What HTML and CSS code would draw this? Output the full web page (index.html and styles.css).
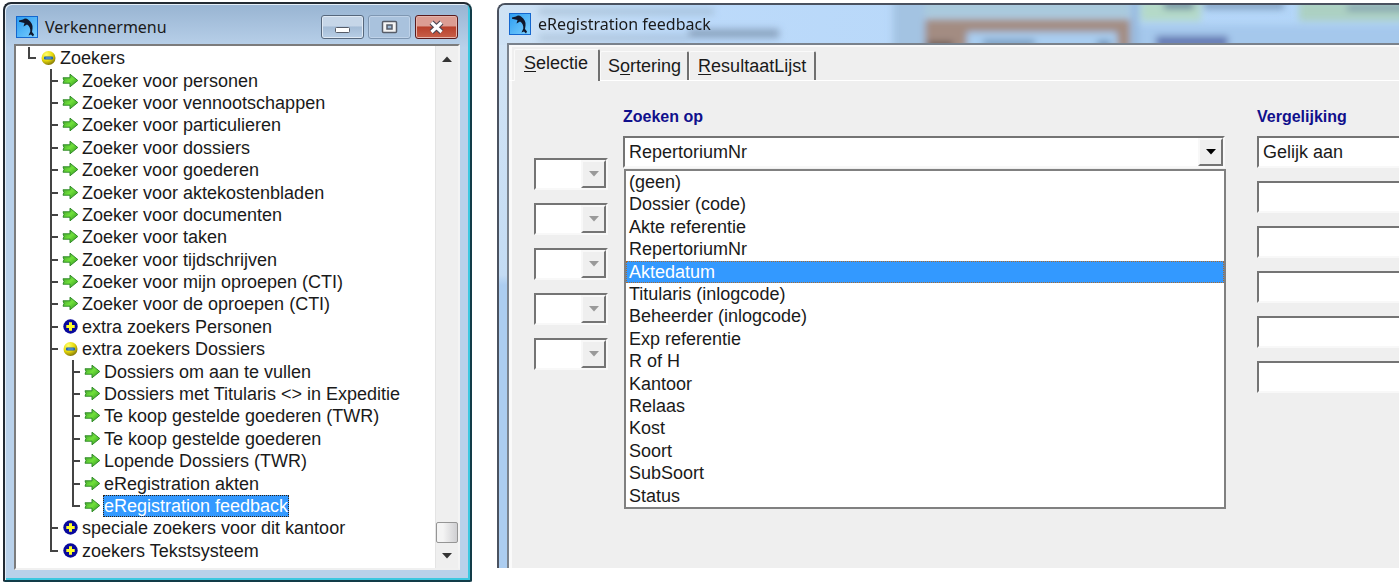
FILE: index.html
```html
<!DOCTYPE html>
<html lang="nl">
<head>
<meta charset="utf-8">
<title>eRegistration feedback</title>
<link rel="stylesheet" href="styles.css">
</head>
<body>
<svg class="defs" aria-hidden="true">
  <defs>
    <linearGradient id="green" x1="0" y1="0" x2="1" y2="1"><stop offset="0" stop-color="#3f9a2c"/><stop offset=".5" stop-color="#6fe03a"/><stop offset="1" stop-color="#2c8c1c"/></linearGradient>
    <radialGradient id="yellow" cx=".35" cy=".25" r=".8"><stop offset="0" stop-color="#ffff6a"/><stop offset=".55" stop-color="#e6d80c"/><stop offset="1" stop-color="#7d7208"/></radialGradient>
    <linearGradient id="sea" x1="0" y1="0" x2="1" y2="1"><stop offset="0" stop-color="#2b9cf0"/><stop offset="1" stop-color="#7cd0ff"/></linearGradient>
  </defs>
  <symbol id="arrow" viewBox="0 0 18 18"><path d="M1 5.800H8V2.200L15.800 8.500L8 14.800V11.200H1L2 8.500Z" fill="url(#green)" stroke="#2f8a28" stroke-width="1"/></symbol>
  <symbol id="minus" viewBox="0 0 18 18"><circle cx="8.500" cy="9" r="7" fill="url(#yellow)"/><rect x="4" y="7.400" width="9" height="3.200" rx="1" fill="#1d5fae"/><path d="M5.500 9h6" stroke="#6fb0e8"/></symbol>
  <symbol id="plus" viewBox="0 0 18 18"><circle cx="8.500" cy="8.500" r="7.200" fill="#0a0a9c"/><path d="M8.500 4.300v8.400M4.300 8.500h8.400" stroke="#ffff2a" stroke-width="3"/></symbol>
  <symbol id="dolphin" viewBox="0 0 22 22"><rect x=".5" y=".5" width="21" height="21" fill="url(#sea)" stroke="#1467cf"/><path d="M3 4.500L7 3.500C8.500 2 10.500 2 12 3.500C15.500 6 17 9 16.500 12.500L16 16L18 18.500L17 20.500L15 18.500L12.500 19.500L14.300 15.500C14.500 12.500 13.500 10 11 8.500L7.500 10.500L8.500 7L3 5.800Z" fill="#10182c"/></symbol>
  <symbol id="down" viewBox="0 0 10 6"><path d="M0 0h10L5 5.500Z" fill="currentColor"/></symbol>
</svg>

<section class="window explorer">
  <header class="title">
    <svg class="logo" aria-hidden="true"><use href="#dolphin"/></svg>
    <h1>Verkennermenu</h1>
    <div class="controls">
      <button class="control" aria-label="Minimaliseren"><svg viewBox="0 0 40 22"><rect x="13.500" y="11.500" width="14" height="5" rx="1" fill="#fff" stroke="#565c68"/></svg></button>
      <button class="control dim" aria-label="Maximaliseren"><svg viewBox="0 0 40 22"><rect x="13.500" y="5.500" width="14" height="11" rx="1" fill="#f4f4f4" stroke="#565c68" stroke-width="1.500"/><rect x="18" y="9" width="5" height="4" fill="#9db9d6" stroke="#565c68" stroke-width="1.500"/></svg></button>
      <button class="control close" aria-label="Sluiten"><svg viewBox="0 0 40 22"><path d="M15.500 6.500l10 9.500M25.500 6.500l-10 9.500" stroke="#4a4350" stroke-width="5.500"/><path d="M15.500 6.500l10 9.500M25.500 6.500l-10 9.500" stroke="#fff" stroke-width="3.200"/></svg></button>
    </div>
  </header>
  <div class="pane">
    <ul class="tree">
      <li><i class="elbow"></i><svg><use href="#minus"/></svg><button>Zoekers</button></li>
      <li><i></i><i class="tee"></i><svg><use href="#arrow"/></svg><button>Zoeker voor personen</button></li>
      <li><i></i><i class="tee"></i><svg><use href="#arrow"/></svg><button>Zoeker voor vennootschappen</button></li>
      <li><i></i><i class="tee"></i><svg><use href="#arrow"/></svg><button>Zoeker voor particulieren</button></li>
      <li><i></i><i class="tee"></i><svg><use href="#arrow"/></svg><button>Zoeker voor dossiers</button></li>
      <li><i></i><i class="tee"></i><svg><use href="#arrow"/></svg><button>Zoeker voor goederen</button></li>
      <li><i></i><i class="tee"></i><svg><use href="#arrow"/></svg><button>Zoeker voor aktekostenbladen</button></li>
      <li><i></i><i class="tee"></i><svg><use href="#arrow"/></svg><button>Zoeker voor documenten</button></li>
      <li><i></i><i class="tee"></i><svg><use href="#arrow"/></svg><button>Zoeker voor taken</button></li>
      <li><i></i><i class="tee"></i><svg><use href="#arrow"/></svg><button>Zoeker voor tijdschrijven</button></li>
      <li><i></i><i class="tee"></i><svg><use href="#arrow"/></svg><button>Zoeker voor mijn oproepen (CTI)</button></li>
      <li><i></i><i class="tee"></i><svg><use href="#arrow"/></svg><button>Zoeker voor de oproepen (CTI)</button></li>
      <li><i></i><i class="tee"></i><svg><use href="#plus"/></svg><button>extra zoekers Personen</button></li>
      <li><i></i><i class="tee"></i><svg><use href="#minus"/></svg><button>extra zoekers Dossiers</button></li>
      <li><i></i><i class="line"></i><i class="tee"></i><svg><use href="#arrow"/></svg><button>Dossiers om aan te vullen</button></li>
      <li><i></i><i class="line"></i><i class="tee"></i><svg><use href="#arrow"/></svg><button>Dossiers met Titularis &lt;&gt; in Expeditie</button></li>
      <li><i></i><i class="line"></i><i class="tee"></i><svg><use href="#arrow"/></svg><button>Te koop gestelde goederen (TWR)</button></li>
      <li><i></i><i class="line"></i><i class="tee"></i><svg><use href="#arrow"/></svg><button>Te koop gestelde goederen</button></li>
      <li><i></i><i class="line"></i><i class="tee"></i><svg><use href="#arrow"/></svg><button>Lopende Dossiers (TWR)</button></li>
      <li><i></i><i class="line"></i><i class="tee"></i><svg><use href="#arrow"/></svg><button>eRegistration akten</button></li>
      <li><i></i><i class="line"></i><i class="elbow"></i><svg><use href="#arrow"/></svg><button class="selected">eRegistration feedback</button></li>
      <li><i></i><i class="tee"></i><svg><use href="#plus"/></svg><button>speciale zoekers voor dit kantoor</button></li>
      <li><i></i><i class="elbow"></i><svg><use href="#plus"/></svg><button>zoekers Tekstsysteem</button></li>
    </ul>
    <div class="scrollbar">
      <button class="step" aria-label="Omhoog"><svg class="up"><use href="#down"/></svg></button>
      <div class="track"><div class="thumb"></div></div>
      <button class="step" aria-label="Omlaag"><svg><use href="#down"/></svg></button>
    </div>
  </div>
</section>

<section class="window feedback">
  <header class="title">
    <svg class="glass" viewBox="0 0 900 40" aria-hidden="true">
      <defs>
        <filter id="soft" x="-10%" y="-50%" width="120%" height="200%"><feGaussianBlur stdDeviation="3.500"/></filter>
        <linearGradient id="sky"><stop offset="0" stop-color="#cfe2f4"/><stop offset=".2" stop-color="#bcdafa"/><stop offset="1" stop-color="#b2d5f8"/></linearGradient>
      </defs>
      <rect width="900" height="40" fill="url(#sky)"/>
      <g filter="url(#soft)">
        <rect x="40" y="3" width="175" height="7" fill="#9db4ca" opacity=".6"/>
        <rect x="40" y="29" width="150" height="8" fill="#9db4ca" opacity=".5"/>
        <rect x="190" y="24" width="90" height="9" fill="#7f97b2" opacity=".8"/>
        <rect x="394" y="-10" width="32" height="60" fill="#a3c3e2"/>
        <rect x="426" y="-8" width="205" height="20" fill="#a9c9dc"/>
        <rect x="426" y="14" width="205" height="34" fill="#a38c82"/>
        <rect x="468" y="27" width="150" height="22" fill="#a9cdf0"/>
        <rect x="484" y="35" width="52" height="6" fill="#6d8fb4"/>
        <rect x="598" y="36" width="14" height="6" fill="#5f7fa6"/>
        <rect x="428" y="37" width="26" height="6" fill="#5a4a48"/>
        <rect x="632" y="-8" width="8" height="56" fill="#96b9de"/>
        <rect x="640" y="20" width="270" height="30" fill="#a5c8ec"/>
        <rect x="642" y="-6" width="60" height="22" fill="#b4d9c8"/>
        <rect x="800" y="-6" width="110" height="22" fill="#acd0c2"/>
        <rect x="665" y="-3" width="30" height="7" fill="#66839c"/>
        <rect x="705" y="-3" width="80" height="7" fill="#7e9cbd"/>
        <rect x="848" y="0" width="60" height="6" fill="#7f9cae"/>
        <rect x="657" y="31" width="72" height="12" fill="#6478b2"/>
      </g>
    </svg>
    <svg class="logo" aria-hidden="true"><use href="#dolphin"/></svg>
    <h1>eRegistration feedback</h1>
  </header>
  <div class="client">
    <nav class="tabs" role="tablist">
      <button role="tab" aria-selected="true" class="tab active"><u>S</u>electie</button>
      <button role="tab" class="tab">S<u>o</u>rtering</button>
      <button role="tab" class="tab"><u>R</u>esultaatLijst</button>
    </nav>
    <form class="page">
      <div class="operators">
        <div class="combo"><select disabled aria-label="Operator 1"></select><span class="drop"><svg><use href="#down"/></svg></span></div>
        <div class="combo"><select disabled aria-label="Operator 2"></select><span class="drop"><svg><use href="#down"/></svg></span></div>
        <div class="combo"><select disabled aria-label="Operator 3"></select><span class="drop"><svg><use href="#down"/></svg></span></div>
        <div class="combo"><select disabled aria-label="Operator 4"></select><span class="drop"><svg><use href="#down"/></svg></span></div>
        <div class="combo"><select disabled aria-label="Operator 5"></select><span class="drop"><svg><use href="#down"/></svg></span></div>
      </div>
      <div class="fields">
        <label for="search">Zoeken op</label>
        <div class="combo">
          <select id="search"><option>RepertoriumNr</option></select>
          <span class="drop enabled"><svg><use href="#down"/></svg></span>
          <ul class="options" role="listbox">
            <li>(geen)</li>
            <li>Dossier (code)</li>
            <li>Akte referentie</li>
            <li>RepertoriumNr</li>
            <li class="selected">Aktedatum</li>
            <li>Titularis (inlogcode)</li>
            <li>Beheerder (inlogcode)</li>
            <li>Exp referentie</li>
            <li>R of H</li>
            <li>Kantoor</li>
            <li>Relaas</li>
            <li>Kost</li>
            <li>Soort</li>
            <li>SubSoort</li>
            <li>Status</li>
          </ul>
        </div>
      </div>
      <div class="fields compare">
        <label for="compare">Vergelijking</label>
        <div class="combo"><select id="compare"><option>Gelijk aan</option></select></div>
        <div class="combo"><select aria-label="Vergelijking 2"></select></div>
        <div class="combo"><select aria-label="Vergelijking 3"></select></div>
        <div class="combo"><select aria-label="Vergelijking 4"></select></div>
        <div class="combo"><select aria-label="Vergelijking 5"></select></div>
        <div class="combo"><select aria-label="Vergelijking 6"></select></div>
      </div>
    </form>
  </div>
</section>
</body>
</html>
```
FILE: styles.css
```css
* { box-sizing: border-box; }

body {
  margin: 0;
  padding: 2px 0 4px 3px;
  min-height: 100vh;
  display: flex;
  gap: 25px;
  overflow: hidden;
  background: #fff;
  color: #1a1a1a;
  font: 18px/22px "Liberation Sans", Arial, sans-serif;
}

button, select { font: inherit; color: inherit; }
button { border: 0; padding: 0; background: none; }
ul { margin: 0; padding: 0; list-style: none; }
.defs { position: absolute; width: 0; height: 0; }

.window { display: flex; flex-direction: column; }

.title {
  display: flex;
  align-items: center;
  gap: 7px;
  flex: none;
}
.title h1 {
  margin: 0;
  font: 16px/22px "Noto Sans", "Open Sans", sans-serif;
}
.logo { width: 22px; height: 22px; flex: none; }

/* Explorer window */
.explorer {
  flex: 0 0 469px;
  padding: 0 10px 10px 9px;
  border: 2px solid #222a33;
  border-right-color: #123c48;
  border-bottom-color: #123c48;
  border-radius: 8px 8px 2px 2px;
  background: linear-gradient(#98b4d2, #b9d1ea 44px);
  box-shadow: inset 1px 1px #e4eef8, inset -2px -2px #3cc8e0;
}
.explorer .title { height: 40px; padding: 6px 2px 0; }
.controls { display: flex; gap: 4px; margin-left: auto; align-self: flex-start; margin-top: 5px; }
.control {
  width: 43px;
  height: 24px;
  border: 1px solid #56677c;
  border-radius: 3px;
  background: linear-gradient(#c6d6e8 45%, #a4bcd6 50%, #b8cee6);
  box-shadow: inset 0 0 0 1px #dfe9f4;
}
.control svg { display: block; width: 40px; height: 22px; }
.control.dim { border-color: #7f97b2; background: #a9c2dd; box-shadow: inset 0 0 0 1px #bfd2e8; }
.control.close {
  border-color: #5a1a1c;
  background: linear-gradient(#dc9d93 45%, #b8402c 50%, #c8604a);
  box-shadow: inset 0 0 0 1px #e6b5ac;
}

.pane {
  flex: 1;
  display: flex;
  border: 2px solid #7c7c7c;
  border-right-color: #f4f4f4;
  border-bottom-color: #f0f0f0;
  background: #fff;
}
.tree {
  flex: 1;
  display: flex;
  flex-direction: column;
  padding: 1px 0 6px 2px;
}
.tree li { flex: 1 0 22px; display: flex; align-items: center; }
.tree i { width: 22px; align-self: stretch; position: relative; }
.tree svg { width: 18px; height: 18px; margin-right: 1px; }
.tree button { padding: 0 1px; line-height: 22px; white-space: nowrap; }
.tree .selected { background: #3399ff; color: #fff; outline: 1px dotted #332211; outline-offset: -1px; }

.tee::before, .line::before, .elbow::before {
  content: "";
  position: absolute;
  left: 10px;
  top: 0;
  bottom: 0;
  border-left: 2px solid #444;
}
.elbow::before { bottom: 50%; }
.tee::after, .elbow::after {
  content: "";
  position: absolute;
  left: 10px;
  top: 50%;
  width: 8px;
  border-top: 2px solid #444;
  margin-top: -1px;
}

.scrollbar {
  width: 23px;
  display: flex;
  flex-direction: column;
  background: #efefef;
  border-left: 1px solid #e4e4e4;
}
.step { height: 25px; display: flex; align-items: center; justify-content: center; color: #333; }
.step svg { width: 10px; height: 6px; }
.step .up { transform: rotate(180deg); }
.track { flex: 1; display: flex; flex-direction: column; justify-content: flex-end; }
.thumb {
  height: 21px;
  border: 1px solid #959595;
  border-radius: 2px;
  background: linear-gradient(90deg, #f4f4f4 30%, #cfcfd2);
}

/* Feedback window, running off the right edge */
.feedback {
  flex: 1;
  min-width: 0;
  margin: 1px 0 14px;
  padding-left: 8px;
  border: solid #4a5260;
  border-width: 2px 0 0 2px;
  border-top-left-radius: 8px;
  background: linear-gradient(#d4e5f5, #c4dcf4 270px, #accdf0 280px);
}
.feedback .title { position: relative; height: 38px; padding-left: 2px; }
.feedback .title > * { position: relative; }
.feedback .title .glass {
  position: absolute;
  left: -8px;
  top: 0;
  width: 900px;
  height: 40px;
  border-top-left-radius: 6px;
}
.client {
  position: relative;
  flex: 1;
  display: flex;
  flex-direction: column;
  border: solid #7a828c;
  border-width: 2px 0 0 2px;
  background: #efefef;
  box-shadow: inset 3px 2px #fafafa;
}

.tabs { display: flex; align-items: flex-end; padding: 4px 0 0 5px; border-bottom: 1px solid #fff; }
.tab {
  height: 29px;
  padding: 0 6px 0 7px;
  border-right: 2px solid #707070;
  border-top: 1px solid #fafafa;
  border-left: 1px solid #fafafa;
  border-radius: 2px 2px 0 0;
}
.tab + .tab + .tab { padding: 0 8px; }
.tab.active { height: 32px; padding: 0 10px 6px 9px; margin-bottom: -1px; background: #efefef; }
.tab u { text-underline-offset: 2px; }

.page {
  flex: 1;
  display: grid;
  grid-template-columns: 74px minmax(0, 1fr) 159px;
  column-gap: 15px;
  padding: 26px 0 0 25px;
  align-items: start;
}
.operators, .fields { display: flex; flex-direction: column; gap: 13px; }
.operators { padding-top: 51px; }
.compare { padding-left: 17px; }
.fields label { font: bold 16px/20px "Liberation Sans", Arial, sans-serif; color: #10108c; margin-bottom: -4px; }

.combo {
  position: relative;
  display: flex;
  height: 32px;
  background: #fff;
  border: 2px solid #747474;
  border-right-color: #f8f8f8;
  border-bottom-color: #f8f8f8;
}
.combo select {
  flex: 1;
  min-width: 0;
  appearance: none;
  border: 0;
  padding: 0 4px;
  background: #fff;
  opacity: 1;
}
.compare .combo { border-right: 0; }
.drop {
  width: 25px;
  display: flex;
  align-items: center;
  justify-content: center;
  border: 2px solid #747474;
  border-top-color: #f8f8f8;
  border-left-color: #f8f8f8;
  background: #efefef;
  color: #999;
}
.drop.enabled { color: #000; }
.drop svg { width: 10px; height: 6px; }

.options {
  position: absolute;
  z-index: 1;
  top: 31px;
  left: -1px;
  right: -3px;
  height: 340px;
  display: grid;
  grid-auto-rows: 1fr;
  border: 2px solid #808080;
  background: #fff;
}
.options li { padding: 0 3px; line-height: 22px; }
.options .selected { background: #3399ff; color: #fff; outline: 1px dotted #a86a30; outline-offset: -1px; }
```
